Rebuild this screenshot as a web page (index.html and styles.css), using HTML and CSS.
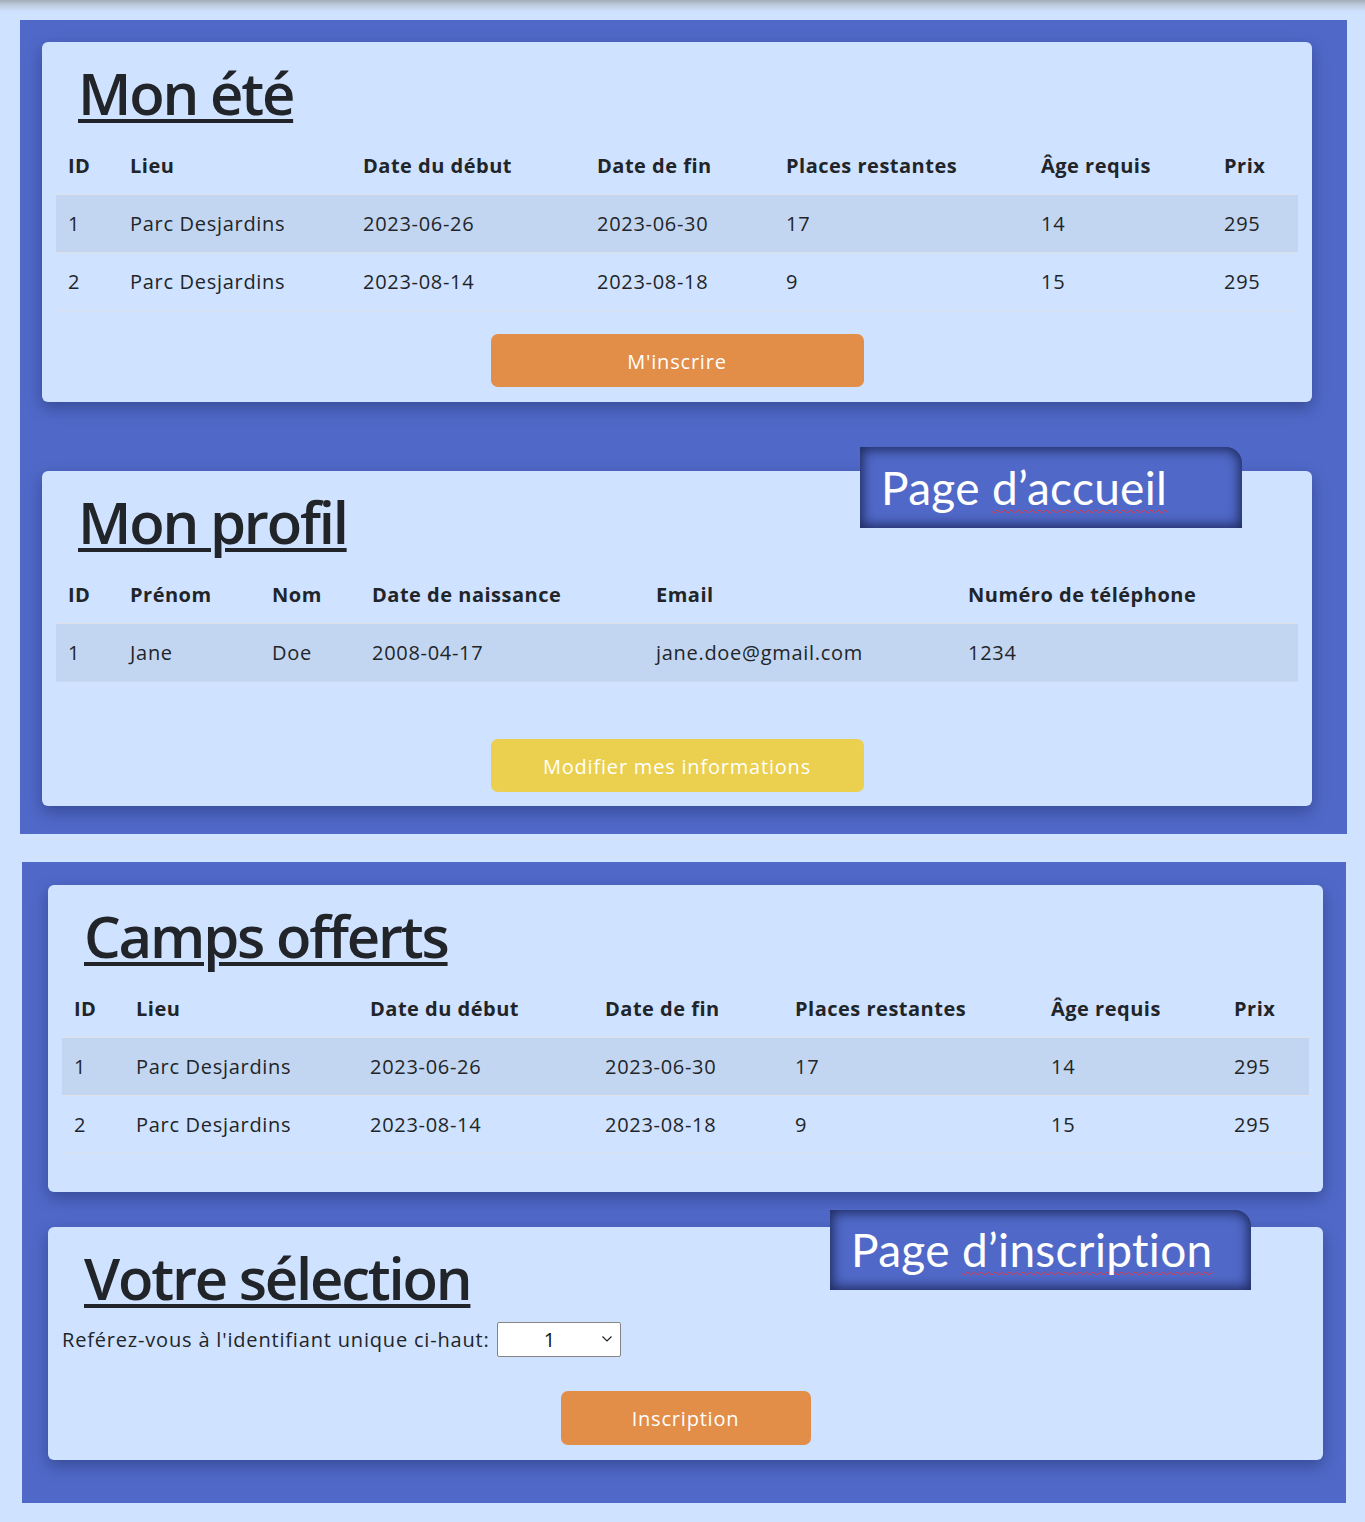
FILE: index.html
```html
<!DOCTYPE html>
<html lang="fr">
<head>
<meta charset="utf-8">
<title>Camps</title>
<link rel="stylesheet" href="styles.css">
</head>
<body>
<div class="topfade"></div>

<section class="panel panel-home">
  <div class="card card-ete">
    <h1 class="title">Mon été</h1>
    <table class="tbl">
      <colgroup>
        <col class="c62"><col class="c233"><col class="c234"><col class="c189"><col class="c255"><col class="c183"><col>
      </colgroup>
      <thead>
        <tr><th>ID</th><th>Lieu</th><th>Date du début</th><th>Date de fin</th><th>Places restantes</th><th>Âge requis</th><th>Prix</th></tr>
      </thead>
      <tbody>
        <tr class="odd"><td>1</td><td>Parc Desjardins</td><td>2023-06-26</td><td>2023-06-30</td><td>17</td><td>14</td><td>295</td></tr>
        <tr><td>2</td><td>Parc Desjardins</td><td>2023-08-14</td><td>2023-08-18</td><td>9</td><td>15</td><td>295</td></tr>
      </tbody>
    </table>
    <div class="btnrow btnrow-ete"><button class="btn btn-orange btn-wide">M'inscrire</button></div>
  </div>

  <div class="card card-profil">
    <h1 class="title">Mon profil</h1>
    <table class="tbl">
      <colgroup>
        <col class="c62"><col class="c142"><col class="c100"><col class="c284"><col class="c312"><col>
      </colgroup>
      <thead>
        <tr><th>ID</th><th>Prénom</th><th>Nom</th><th>Date de naissance</th><th>Email</th><th>Numéro de téléphone</th></tr>
      </thead>
      <tbody>
        <tr class="odd"><td>1</td><td>Jane</td><td>Doe</td><td>2008-04-17</td><td>jane.doe@gmail.com</td><td>1234</td></tr>
      </tbody>
    </table>
    <div class="btnrow btnrow-profil"><button class="btn btn-yellow btn-wide">Modifier mes informations</button></div>
  </div>

  <div class="callout callout-home"><span class="callout-text">Page <span class="spell">d’accueil</span></span></div>
</section>

<section class="panel panel-inscr">
  <div class="card card-camps">
    <h1 class="title">Camps offerts</h1>
    <table class="tbl">
      <colgroup>
        <col class="c62"><col class="c234"><col class="c235"><col class="c190"><col class="c256"><col class="c183"><col>
      </colgroup>
      <thead>
        <tr><th>ID</th><th>Lieu</th><th>Date du début</th><th>Date de fin</th><th>Places restantes</th><th>Âge requis</th><th>Prix</th></tr>
      </thead>
      <tbody>
        <tr class="odd"><td>1</td><td>Parc Desjardins</td><td>2023-06-26</td><td>2023-06-30</td><td>17</td><td>14</td><td>295</td></tr>
        <tr><td>2</td><td>Parc Desjardins</td><td>2023-08-14</td><td>2023-08-18</td><td>9</td><td>15</td><td>295</td></tr>
      </tbody>
    </table>
  </div>

  <div class="card card-select">
    <h1 class="title">Votre sélection</h1>
    <div class="pick">
      <span class="pick-label">Reférez-vous à l'identifiant unique ci-haut:</span>
      <div class="select">
        <span class="select-val">1</span>
        <svg class="chev" width="12" height="8" viewBox="0 0 12 8"><path d="M1.5 1.5 L6 6 L10.5 1.5" fill="none" stroke="#222" stroke-width="1.2"/></svg>
      </div>
    </div>
    <div class="btnrow btnrow-inscr"><button class="btn btn-orange btn-mid">Inscription</button></div>
  </div>

  <div class="callout callout-inscr"><span class="callout-text">Page <span class="spell">d’inscription</span></span></div>
</section>
</body>
</html>
```

FILE: styles.css
```css
* { box-sizing: border-box; }

html, body {
  margin: 0;
  padding: 0;
}

body {
  background: #cfe2ff;
  font-family: "Open Sans", "Noto Sans", sans-serif;
  color: #212529;
  min-height: 1522px;
  letter-spacing: 0.7px;
}

.topfade {
  height: 20px;
  background: linear-gradient(#a3adba 0, #bfcbdc 5px, #cfe2ff 12px);
}

.panel {
  position: relative;
  background: #5069c8;
  display: flex;
  flex-direction: column;
}

.panel-home {
  margin-left: 20px;
  width: 1327px;
  padding: 22px 35px 28px 22px;
  gap: 69px;
}

.panel-inscr {
  margin: 28px 0 0 22px;
  width: 1324px;
  padding: 23px 23px 43px 26px;
  gap: 35px;
}

.card {
  background: #cfe2ff;
  border-radius: 6px;
  padding: 14px 14px 15px;
  box-shadow: 0 6px 16px rgba(10, 20, 60, 0.35);
}

.card-profil { padding-bottom: 14px; }
.card-camps { padding-bottom: 38px; }

.title {
  margin: 1px 0 8px 22px;
  font-size: 58px;
  line-height: 72px;
  font-weight: 600;
  color: #212529;
  text-decoration: underline;
  text-decoration-thickness: 4px;
  text-underline-offset: 4px;
  text-decoration-skip-ink: auto;
  display: inline-block;
  letter-spacing: -2.2px;
}

.card-select .title { margin-bottom: 0; }

.tbl {
  width: 100%;
  border-collapse: collapse;
  table-layout: fixed;
  font-size: 20px;
  line-height: 30px;
}

.tbl th, .tbl td {
  text-align: left;
  padding: 14px 12px 13px;
  border-bottom: 1px solid #dee2e6;
  white-space: nowrap;
}

.tbl th { font-weight: 700; letter-spacing: 0.5px; }
.tbl td { font-weight: 400; }

.tbl tr.odd td { background: #c3d6f1; }

.card-profil .tbl tbody tr:last-child td { border-bottom: 1px solid #c9d9f0; }

.c62 { width: 62px; }
.c100 { width: 100px; }
.c142 { width: 142px; }
.c183 { width: 183px; }
.c189 { width: 189px; }
.c190 { width: 190px; }
.c233 { width: 233px; }
.c234 { width: 234px; }
.c235 { width: 235px; }
.c255 { width: 255px; }
.c256 { width: 256px; }
.c284 { width: 284px; }
.c312 { width: 312px; }

.btnrow {
  display: flex;
  justify-content: center;
}

.btnrow-ete { margin-top: 23px; }
.btnrow-profil { margin-top: 57px; }
.btnrow-inscr { margin-top: 34px; }

.btn {
  border: none;
  border-radius: 7px;
  color: #fff;
  font-family: "Open Sans", "Noto Sans", sans-serif;
  font-size: 20px;
  line-height: 28px;
  letter-spacing: 0.8px;
  padding: 2px 0 0;
  cursor: pointer;
}

.btn-wide { width: 373px; height: 53px; }
.btn-mid { width: 250px; height: 54px; }

.btn-orange { background: #e28d48; }
.btn-yellow { background: #ebcf4e; }

.pick {
  display: flex;
  align-items: center;
  margin-top: 8px;
  gap: 7px;
  font-size: 20px;
  line-height: 30px;
}

.pick-label { letter-spacing: 0.82px; }

.select {
  position: relative;
  width: 124px;
  height: 35px;
  background: #fff;
  border: 1px solid #858585;
  border-radius: 2px;
  display: flex;
  align-items: center;
  padding-left: 46px;
  font-size: 20px;
  color: #111;
}

.chev {
  position: absolute;
  right: 7px;
  top: 12px;
}

.callout {
  position: absolute;
  background: #5069c8;
  color: #fff;
  font-family: Lato, "Open Sans", sans-serif;
  font-size: 46px;
  line-height: 46px;
  letter-spacing: 0.3px;
  display: flex;
  align-items: center;
  padding-left: 21px;
  border-top-right-radius: 16px;
  box-shadow: inset 0 0 12px 3px rgba(15, 22, 60, 0.75);
  white-space: nowrap;
}

.callout-home {
  left: 840px;
  top: 427px;
  width: 382px;
  height: 81px;
}

.callout-inscr {
  left: 808px;
  top: 348px;
  width: 421px;
  height: 80px;
}

.spell {
  text-decoration: underline wavy #e8343e;
  text-decoration-thickness: 1.2px;
  text-underline-offset: 4px;
  text-decoration-skip-ink: none;
}
```
